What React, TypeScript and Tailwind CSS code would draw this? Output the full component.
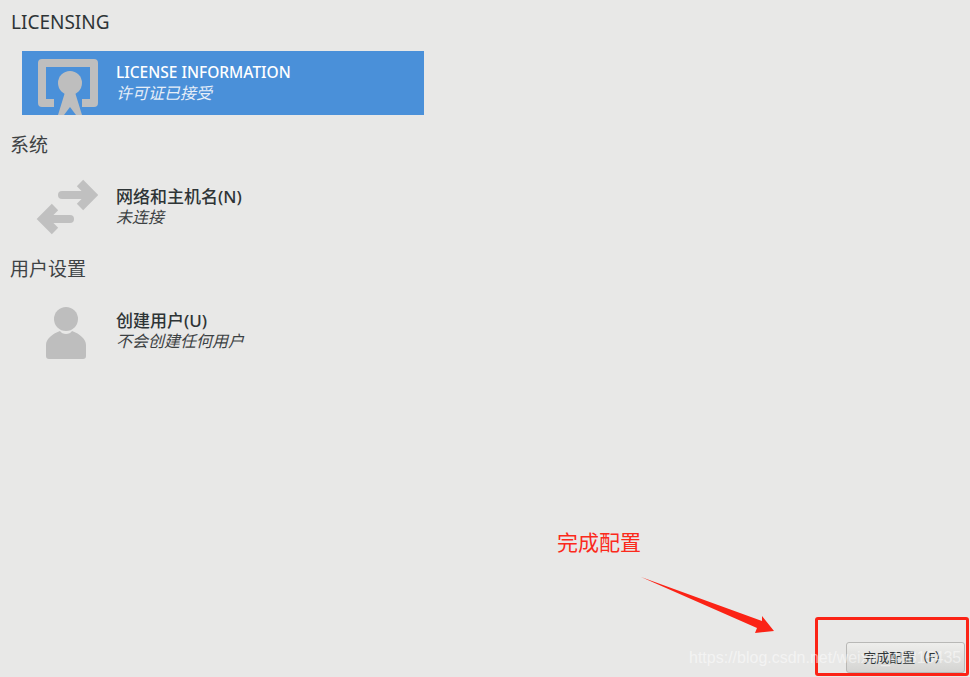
const sans = '"Noto Sans","Noto Sans CJK SC",sans-serif';

function LicenseIcon() {
  return (
    <svg width="64" height="64" viewBox="0 0 64 64" className="block">
      <path d="M20 52H8V12H60V52H48" fill="none" stroke="#bebebe" strokeWidth="8" strokeLinejoin="round" />
      <circle cx="36" cy="32" r="12" fill="#bebebe" />
      <path d="M32 38H40L48 64H42L36 56L30 64H24Z" fill="#bebebe" />
    </svg>
  );
}

function NetworkIcon() {
  return (
    <svg width="64" height="64" viewBox="0 0 64 64" className="block">
      <g fill="none" stroke="#c0c0c0" strokeWidth="8" strokeLinecap="round">
        <path d="M28 20H56" />
        <path d="M46 8L58 20L46 32" strokeWidth="9" strokeLinecap="butt" />
        <path d="M36 44H10" />
        <path d="M21 32L9 44L21 56" strokeWidth="9" strokeLinecap="butt" />
      </g>
    </svg>
  );
}

function UserIcon() {
  return (
    <svg width="64" height="64" viewBox="0 0 64 64" className="block">
      <path d="M12 56V46C12 40 18 35 26 32C28 36 36 36 38 32C46 35 52 40 52 46V57Q52 60 49 60H15Q12 60 12 57Z" fill="#bebebe" />
      <circle cx="32" cy="20" r="12" fill="#bebebe" />
    </svg>
  );
}

function Spoke({ icon, title, status, selected }: { icon: React.ReactNode; title: string; status: string; selected?: boolean }) {
  return (
    <div className={`ml-[22px] w-[402px] h-[64px] flex items-center overflow-hidden ${selected ? "bg-[#4a90d9]" : ""}`}>
      <div className="w-[64px] ml-[12px] shrink-0">{icon}</div>
      <div className="ml-[18px] flex flex-col">
        <div className={`leading-[21px] font-medium ${selected ? "text-[15.5px] text-white" : "text-[17px] text-[#2e3436]"}`}>{title}</div>
        <div className={`text-[16px] leading-[21px] italic ${selected ? "text-[#e6eef8]" : "text-[#3c4143]"}`}>{status}</div>
      </div>
    </div>
  );
}

function Heading({ children }: { children: React.ReactNode }) {
  return <h2 className="ml-[10px] mt-[16px] mb-[16px] h-[28px] text-[19px] leading-[28px] text-[#3e4244]">{children}</h2>;
}

export default function App() {
  return (
    <div className="relative w-[970px] h-[677px] overflow-hidden bg-[#e8e8e7] flex flex-col" style={{ fontFamily: sans }}>
      <h1 className="ml-[11px] mt-[10px] h-[41px] text-[19px] leading-[24px] text-[#2e3436]">LICENSING</h1>
      <Spoke selected icon={<LicenseIcon />} title="LICENSE INFORMATION" status="许可证已接受" />
      <Heading>系统</Heading>
      <Spoke icon={<NetworkIcon />} title="网络和主机名(N)" status="未连接" />
      <Heading>用户设置</Heading>
      <Spoke icon={<UserIcon />} title="创建用户(U)" status="不会创建任何用户" />
      <div className="mt-auto mb-[4px] mr-[5px] flex justify-end">
        <button className="w-[119px] h-[31px] rounded-[3px] border border-[#b8b8b6] bg-gradient-to-b from-[#eeeeec] to-[#d4d4d2] text-[13px] text-[#2e3436]">
          完成配置（F）
        </button>
      </div>

      {/* Annotations laid over the screenshot */}
      <div className="absolute left-[557px] top-[526px] text-[21px] leading-[30px] text-[#fb2a1c]" style={{ fontFamily: '"Noto Sans CJK SC",sans-serif' }}>完成配置</div>
      <svg className="absolute left-[636px] top-[572px]" width="145" height="66" viewBox="0 0 145 66">
        <path d="M5 5L126 49L126 44L138 59L119 61L121 56Z" fill="#fb2316" />
      </svg>
      <div className="absolute left-[815px] top-[617px] w-[154px] h-[59px] rounded-[3px] border-[3px] border-[#fb2316]" />
      <div className="absolute left-[689px] top-[647px] text-[16px] leading-[21px] text-white/50 whitespace-nowrap" style={{ fontFamily: '"Liberation Sans",sans-serif' }}>
        https://blog.csdn.net/weixin_45815435
      </div>
    </div>
  );
}
